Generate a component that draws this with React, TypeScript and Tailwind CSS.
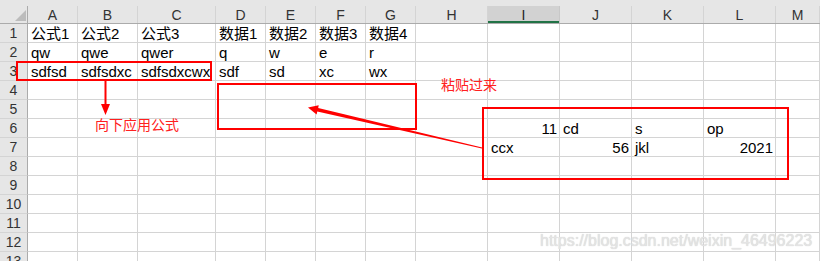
type Cell = { v: string; num?: boolean };

const COLS = ['A', 'B', 'C', 'D', 'E', 'F', 'G', 'H', 'I', 'J', 'K', 'L', 'M'];
const ACTIVE_COL = 'I';

const t = (v: string): Cell => ({ v });
const n = (v: string): Cell => ({ v, num: true });

// sheet contents keyed by row number, one entry per column A..M
const DATA: Record<number, (Cell | null)[]> = {
    1: [t('公式1'), t('公式2'), t('公式3'), t('数据1'), t('数据2'), t('数据3'), t('数据4')],
    2: [t('qw'), t('qwe'), t('qwer'), t('q'), t('w'), t('e'), t('r')],
    3: [t('sdfsd'), t('sdfsdxc'), t('sdfsdxcwx'), t('sdf'), t('sd'), t('xc'), t('wx')],
    6: [null, null, null, null, null, null, null, null, n('11'), t('cd'), t('s'), t('op')],
    7: [null, null, null, null, null, null, null, null, t('ccx'), n('56'), t('jkl'), n('2021')],
};

const ROWS = Array.from({ length: 13 }, (_, i) => i + 1);

const gridCols = 'grid grid-cols-[28px_50px_60px_78px_50px_50px_50px_50px_72px_72px_72px_72px_72px_1fr]';

function ColumnHeader() {
    return (
        <div className={`${gridCols} h-[18px] border-b border-[#ababab]`}>
            <div className="relative border-r border-[#ababab] bg-[#e6e6e6]">
                <svg className="absolute left-[15px] top-[4px] h-[11px] w-[11px]" viewBox="0 0 11 11">
                    <polygon points="11,0 11,11 0,11" fill="#bcbcbc" />
                </svg>
            </div>
            {COLS.map((c) =>
                c === ACTIVE_COL ? (
                    <div
                        key={c}
                        className="flex items-center justify-center border-r border-[#c8c8c8] bg-[#d2d2d2] text-[14px] leading-none text-[#1e1e1e] shadow-[inset_0_-2px_0_#217346]"
                    >
                        {c}
                    </div>
                ) : (
                    <div
                        key={c}
                        className="flex items-center justify-center border-r border-[#d4d4d4] bg-[#e6e6e6] text-[14px] leading-none text-[#333]"
                    >
                        {c}
                    </div>
                )
            )}
        </div>
    );
}

function SheetRow({ row }: { row: number }) {
    const cells = DATA[row] ?? [];
    return (
        <div className={`${gridCols} h-[19px]`}>
            <div className="flex items-center justify-center border-r border-b border-r-[#ababab] border-b-[#d4d4d4] bg-[#e6e6e6] text-[14px] leading-none text-[#333]">
                {row}
            </div>
            {COLS.map((c, i) => {
                const cell = cells[i];
                return (
                    <div
                        key={c}
                        className={`flex items-center overflow-visible whitespace-nowrap border-r border-b border-[#d4d4d4] text-[15px] leading-none text-black ${
                            cell?.num ? 'justify-end pr-[2px]' : 'pl-[3px]'
                        }`}
                    >
                        {cell?.v}
                    </div>
                );
            })}
        </div>
    );
}

export default function App() {
    return (
        <div className="relative h-[261px] w-[820px] overflow-hidden bg-white font-['Liberation_Sans','Noto_Sans_CJK_SC',sans-serif]">
            {/* top strip above the column letters */}
            <div className="h-[6px] bg-[#e6e6e6]" />
            <ColumnHeader />
            {ROWS.map((r) => (
                <SheetRow key={r} row={r} />
            ))}

            {/* annotation boxes */}
            <div className="absolute left-[16px] top-[61px] h-[20px] w-[196px] border-2 border-[#ff0000]" />
            <div className="absolute left-[217px] top-[83px] h-[47px] w-[200px] border-2 border-[#ff0000]" />
            <div className="absolute left-[482px] top-[107px] h-[73px] w-[307px] border-2 border-[#ff0000]" />

            {/* arrows */}
            <svg className="pointer-events-none absolute left-0 top-0" width="820" height="261" viewBox="0 0 820 261">
                <rect x="104.5" y="81" width="2" height="25" fill="#ff0000" />
                <polygon points="101,104 110,104 105.5,115" fill="#ff0000" />
                <polygon
                    points="308,107.5 318.7,105.2 318.2,108 482.1,147.4 481.9,148.6 317.3,111.6 316.6,114.4"
                    fill="#ff0000"
                />
            </svg>

            <div className="absolute left-[95px] top-[117px] text-[14px] leading-none text-[#ff2020] font-['Noto_Sans_CJK_SC',sans-serif]">
                向下应用公式
            </div>
            <div className="absolute left-[441px] top-[77px] text-[14px] leading-none text-[#ff2020] font-['Noto_Sans_CJK_SC',sans-serif]">
                粘贴过来
            </div>

            <div className="absolute left-[540px] top-[233px] text-[16px] leading-none text-[#e4e4e4] [text-shadow:0_0_1px_#c8c8c8]">
                https://blog.csdn.net/weixin_46496223
            </div>
        </div>
    );
}
